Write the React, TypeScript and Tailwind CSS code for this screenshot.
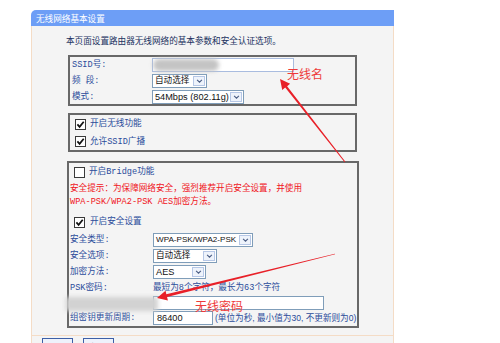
import React from 'react';

// Shared text styles
const LABEL = "text-[#2b4c9b]";
const LATIN = "font-['Liberation_Sans',sans-serif]";

function CheckBox({ checked }: { checked?: boolean }) {
  return (
    <span className="flex h-[11px] w-[11px] shrink-0 items-center justify-center border border-[#3a3a3a] bg-white">
      {checked && (
        <svg viewBox="0 0 9 9" className="h-[9px] w-[9px]">
          <path d="M1.4 4.4 L3.6 6.9 L7.7 1.7" fill="none" stroke="#111" strokeWidth={1.7} />
        </svg>
      )}
    </span>
  );
}

function Select({ value, className, textClass = '' }: { value: string; className: string; textClass?: string }) {
  return (
    <div className={`flex h-[14px] items-center border border-[#7f9db9] bg-white ${className}`}>
      <span className={`flex-1 overflow-hidden whitespace-nowrap pl-[2px] leading-[12px] text-[#111] ${textClass}`}>
        {value}
      </span>
      <span className="mr-px flex h-[10px] w-[12px] shrink-0 items-center justify-center border border-[#b6c7e6] bg-[#eef3fb]">
        <svg viewBox="0 0 8 5" className="h-[4px] w-[7px]">
          <path d="M1 1 L4 4 L7 1" fill="none" stroke="#4c5f86" strokeWidth={1.4} />
        </svg>
      </span>
    </div>
  );
}

export default function App() {
  return (
    <div className="relative h-[343px] w-[500px] overflow-hidden bg-white font-['Liberation_Mono','Noto_Sans_CJK_SC',monospace] text-[8.6px] leading-[14px]">
      <div className="ml-[31px] mt-[10px] w-[363px]">
        {/* Header */}
        <div className="h-[16px] rounded-tl-[5px] bg-[#6d9ef6] pl-[5px] font-['Noto_Sans_CJK_SC',sans-serif] leading-[16px] text-white">
          无线网络基本设置
        </div>

        <div className="border-x border-[#f4dcc6] bg-[#f4f4f4]">
          <p className="h-[29px] pl-[34px] pt-[7px] font-['Noto_Sans_CJK_SC',sans-serif] text-[#22325f]">
            本页面设置路由器无线网络的基本参数和安全认证选项。
          </p>

          {/* Basic settings */}
          <div className="ml-[36px] w-[289px] border-2 border-[#686868] pl-[2px]">
            <div className="flex h-[16px] items-center">
              <span className={`w-[80px] ${LABEL}`}>SSID号:</span>
              <div className="relative h-[14px] w-[142px] border border-[#a9bcdf] bg-white">
                <div className="absolute left-0 top-0 h-full w-[66px] rounded-full bg-[#c4c4c4] blur-[2px]" />
              </div>
            </div>
            <div className="flex h-[16px] items-center">
              <span className={`w-[80px] ${LABEL}`}>频 段:</span>
              <Select value="自动选择" className="w-[55px]" />
            </div>
            <div className="flex h-[15px] items-center">
              <span className={`w-[80px] ${LABEL}`}>模式:</span>
              <Select value="54Mbps (802.11g)" className="w-[92px]" textClass={`${LATIN} text-[9.2px]`} />
            </div>
          </div>

          {/* Wireless switches */}
          <div className="ml-[36px] mt-[7px] w-[289px] border-2 border-[#686868] pl-[5px]">
            <div className="flex h-[18px] items-center gap-[4px]">
              <CheckBox checked />
              <span className={LABEL}>开启无线功能</span>
            </div>
            <div className="flex h-[17px] items-center gap-[4px]">
              <CheckBox checked />
              <span className={LABEL}>允许SSID广播</span>
            </div>
          </div>

          {/* Security */}
          <div className="ml-[35px] mt-[9px] w-[292px] border-2 border-[#686868] pl-px">
            <div className="flex h-[18px] items-center gap-[4px] pl-[4px]">
              <CheckBox />
              <span className={LABEL}>开启Bridge功能</span>
            </div>
            <div className="mt-[2px] leading-[13px] text-[#f0141c]">
              <div>安全提示：为保障网络安全，强烈推荐开启安全设置，并使用</div>
              <div>WPA-PSK/WPA2-PSK AES加密方法。</div>
            </div>
            <div className="mt-[4px] flex h-[18px] items-center gap-[5px] pl-[4px]">
              <CheckBox checked />
              <span className={LABEL}>开启安全设置</span>
            </div>
            <div className="flex h-[17px] items-center">
              <span className={`w-[83px] ${LABEL}`}>安全类型:</span>
              <Select value="WPA-PSK/WPA2-PSK" className="w-[100px]" textClass={`${LATIN} text-[8.1px]`} />
            </div>
            <div className="flex h-[16px] items-center">
              <span className={`w-[83px] ${LABEL}`}>安全选项:</span>
              <Select value="自动选择" className="w-[64px]" />
            </div>
            <div className="flex h-[16px] items-center">
              <span className={`w-[83px] ${LABEL}`}>加密方法:</span>
              <Select value="AES" className="w-[53px]" textClass={`${LATIN} text-[9.2px]`} />
            </div>
            <div className="flex h-[15px] items-center">
              <span className={`w-[83px] ${LABEL}`}>PSK密码:</span>
              <span className={LABEL}>最短为8个字符，最长为63个字符</span>
            </div>
            <div className="flex h-[15px] items-center">
              <span className="w-[83px]" />
              <div className="h-[14px] w-[171px] border border-[#7f9db9] bg-white" />
            </div>
            <div className="flex h-[16px] items-center whitespace-nowrap">
              <span className={`w-[83px] shrink-0 ${LABEL}`}>组密钥更新周期:</span>
              <div className={`flex h-[14px] w-[60px] shrink-0 items-center border border-[#7f9db9] bg-white pl-[3px] text-[9.2px] text-[#111] ${LATIN}`}>
                86400
              </div>
              <span className={`ml-[2px] font-['Liberation_Sans','Noto_Sans_CJK_SC',sans-serif] ${LABEL}`}>
                (单位为秒, 最小值为30, 不更新则为0)
              </span>
            </div>
          </div>

          {/* Buttons */}
          <div className="mt-[7px] flex gap-[10px] border-t border-[#f4dcc6] pl-[10px] pt-[2px]">
            <button className="h-[18px] w-[31px] border border-[#3d5fa6] bg-[#eef2fb] font-['Noto_Sans_CJK_SC',sans-serif] text-[#1b2f66]">
              保存
            </button>
            <button className="h-[18px] w-[31px] border border-[#3d5fa6] bg-[#eef2fb] font-['Noto_Sans_CJK_SC',sans-serif] text-[#1b2f66]">
              帮助
            </button>
          </div>
        </div>
      </div>

      {/* Blurred password label */}
      <div className="absolute left-[66px] top-[297px] h-[14px] w-[92px] bg-[#d2d2d2] blur-[2px]" />

      {/* Annotations */}
      <span className="absolute left-[287px] top-[67px] font-['Noto_Sans_CJK_SC',sans-serif] text-[12px] leading-[14px] text-[#ee3a3a]">
        无线名
      </span>
      <span className="absolute left-[195px] top-[299px] font-['Noto_Sans_CJK_SC',sans-serif] text-[12px] leading-[14px] text-[#ee3a3a]">
        无线密码
      </span>
      <svg className="pointer-events-none absolute left-0 top-0 h-[343px] w-[500px]" viewBox="0 0 500 343">
        <polygon
          points="345.39,161.69 287.12,86.14 290.11,83.8 280,79 282.23,89.96 285.22,87.62 344.61,162.31"
          fill="#e82028"
        />
        <polygon
          points="335.07,254.29 167.07,297.06 167.91,300.45 157,298 165.51,290.75 166.35,294.14 334.93,253.71"
          fill="#e82028"
        />
      </svg>
    </div>
  );
}
